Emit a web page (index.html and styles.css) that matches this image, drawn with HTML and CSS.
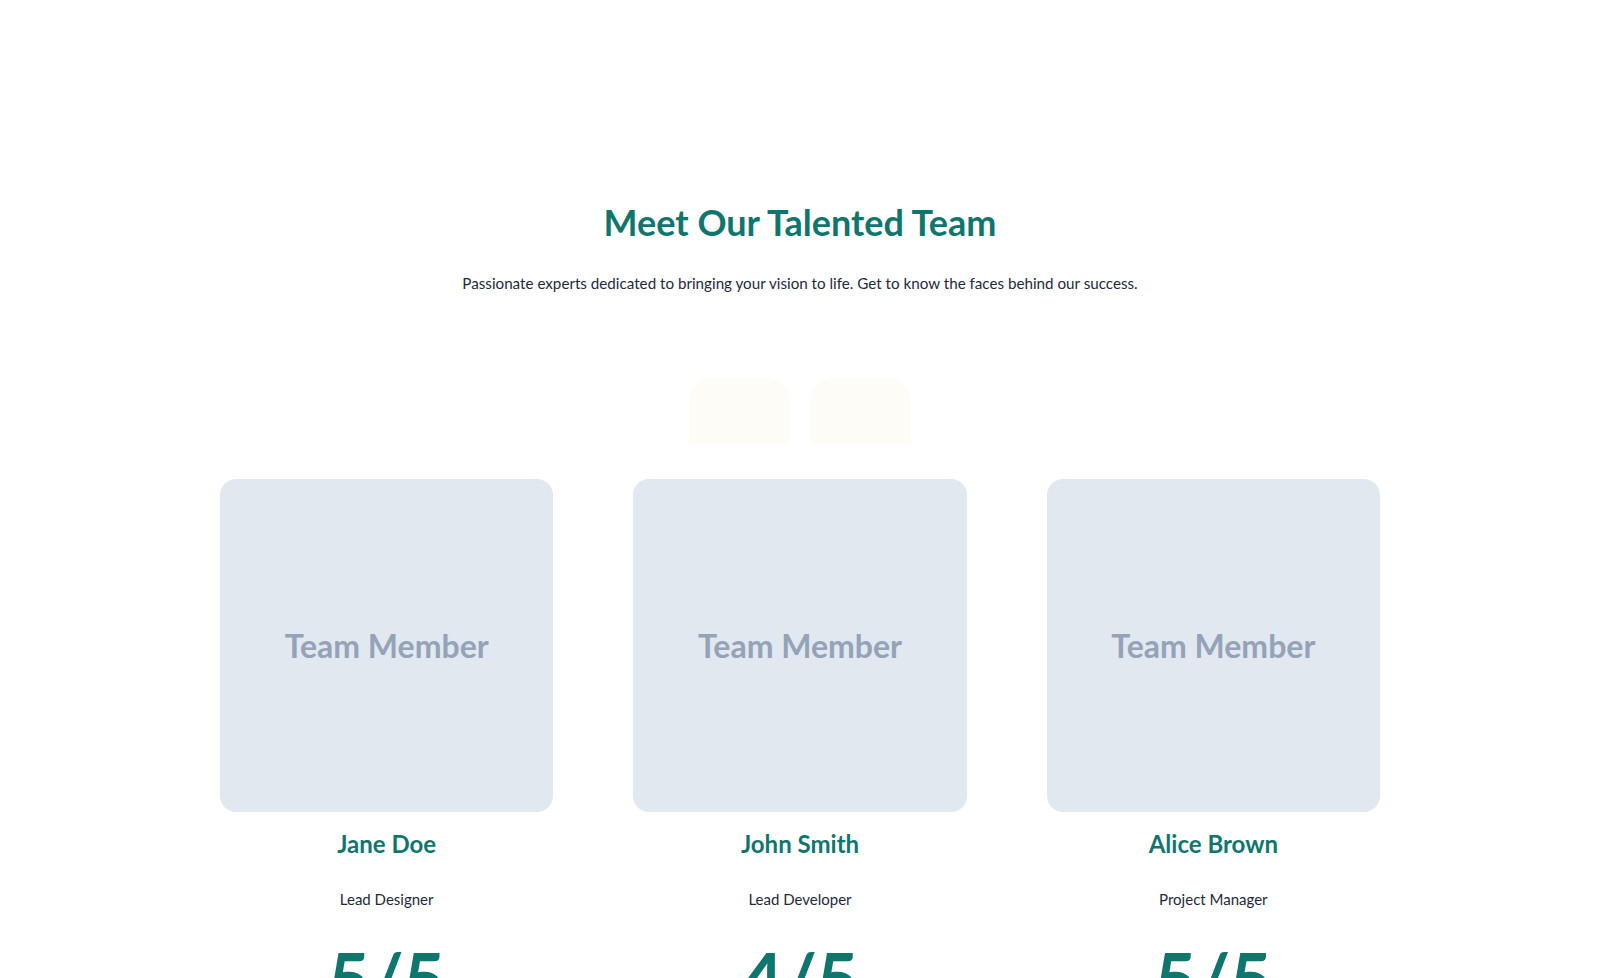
FILE: index.html
```html
<!doctype html>
<html lang=en>
	<head>
		<meta charset=utf-8>
		<title>Meet Our Talented Team</title>

		<link rel="stylesheet" href="styles.css">
	</head>
	<body>
		<div id="team">
			<div class="inner">
				<h2>Meet Our Talented Team</h2>
				<p class="lead">Passionate experts dedicated to bringing your vision to life. Get to know the faces behind our success.</p>

				<div class="tabs">
					<button class="tab"></button>
					<button class="tab"></button>
				</div>

				<div class="grid">
					<div class="member">
						<div class="photo">Team Member</div>
						<h3>Jane Doe</h3>
						<p class="role">Lead Designer</p>
						<div class="score">5/5</div>
					</div>
					<div class="member">
						<div class="photo">Team Member</div>
						<h3>John Smith</h3>
						<p class="role">Lead Developer</p>
						<div class="score">4/5</div>
					</div>
					<div class="member">
						<div class="photo">Team Member</div>
						<h3>Alice Brown</h3>
						<p class="role">Project Manager</p>
						<div class="score">5/5</div>
					</div>
				</div>
			</div>
		</div>
	</body>
</html>
```

FILE: styles.css
```css
body
{
	margin: 0px;
	padding: 0px;
	color: #1e293b;
	background-color: #ffffff;
	font-family: 'Lato', 'Open Sans', sans-serif;
	font-size: 16px;
	overflow: hidden;
}

#team
{
	padding: 201px 20px 0px 20px;
}

#team .inner
{
	max-width: 1160px;
	margin: 0px auto;
	text-align: center;
}

#team h2
{
	margin: 0px;
	font-size: 36px;
	line-height: 1.2;
	font-weight: 700;
	color: #0f766e;
}

#team .lead
{
	margin: 28px 0px 0px 0px;
	font-size: 15.2px;
	line-height: 1.5;
	color: #1e293b;
}

.tabs
{
	display: flex;
	justify-content: center;
	gap: 22px;
	margin-top: 83px;
}

.tab
{
	width: 100px;
	height: 67px;
	border: none;
	border-radius: 22px 22px 0px 0px;
	background-color: #fdfcf6;
}

.grid
{
	display: grid;
	grid-template-columns: repeat(3, 1fr);
	gap: 80px;
	margin-top: 34px;
}

.photo
{
	aspect-ratio: 1 / 1;
	display: flex;
	align-items: center;
	justify-content: center;
	border-radius: 16px;
	background-color: #e2e8f0;
	color: #94a3b8;
	font-size: 32px;
	font-weight: 700;
}

.member h3
{
	margin: 16px 0px 0px 0px;
	font-size: 24px;
	line-height: 1.3;
	font-weight: 700;
	color: #0f766e;
}

.role
{
	margin: 28px 0px 0px 0px;
	font-size: 15px;
	line-height: 1.5;
}

.score
{
	margin-top: 25px;
	font-size: 72px;
	line-height: 1.2;
	font-weight: 700;
	color: #0f766e;
}
```
